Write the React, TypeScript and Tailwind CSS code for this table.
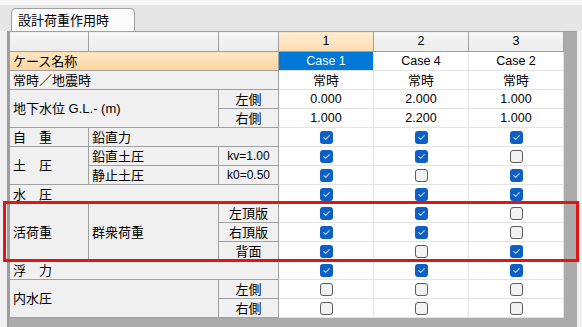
import React from "react";

type Cell = boolean;

const lbl = "border border-[#a0a0a0] bg-[#f0f0f0] px-[3px] text-left";
const lblC = "border border-[#a0a0a0] bg-[#f0f0f0] text-center";
const dat = "border border-[#e3e3e3] bg-white text-center";

const Check = ({ on }: { on: Cell }) =>
  on ? (
    <span className="inline-flex w-[13px] h-[13px] rounded-[3px] bg-[#0d5fc3] items-center justify-center align-middle">
      <svg width="9" height="9" viewBox="0 0 9 9" fill="none">
        <path d="M1.8 4.6 L3.7 6.4 L7.3 2.6" stroke="#a9cdf3" strokeWidth="1.3" strokeLinecap="round" strokeLinejoin="round" />
      </svg>
    </span>
  ) : (
    <span className="inline-block w-[13px] h-[13px] rounded-[3px] bg-[#f2f2f2] border-[1.5px] border-[#5c5c5c] align-middle" />
  );

const Checks = ({ v }: { v: Cell[] }) => (
  <>
    {v.map((on, i) => (
      <td key={i} className={dat}>
        <div className="flex items-center justify-center">
          <Check on={on} />
        </div>
      </td>
    ))}
  </>
);

const App = () => {
  return (
    <div className="relative w-[582px] h-[327px] bg-[#f0f0f0] overflow-hidden text-[12.5px] leading-none text-black font-['Liberation_Sans','Noto_Sans_CJK_JP',sans-serif]">
      {/* tab strip */}
      <div className="h-[31px] pt-[8px] pl-[11px] mt-0 bg-[linear-gradient(#f7f7f7_0px,#f7f7f7_5px,#e6e6e6_5px)]">
        <div className="w-[124px] h-[23px] bg-[#fbfbfb] border border-b-0 border-[#a0a0a0] rounded-t-[5px] pl-[6px] pt-[5px] text-[13px]">
          設計荷重作用時
        </div>
      </div>

      {/* grid area, gray behind = scroll track */}
      <div className="ml-[7px] w-[570px] h-[296px] bg-[#ababab] border-t border-l-2 border-[#9c9c9c]">
        <table className="table-fixed border-collapse w-[554px] -mt-px">
          <colgroup>
            <col className="w-[79px]" />
            <col className="w-[130px]" />
            <col className="w-[60px]" />
            <col className="w-[95px]" />
            <col className="w-[95px]" />
            <col className="w-[95px]" />
          </colgroup>
          <tbody>
            <tr className="h-[20px]">
              <td className={`${lbl} bg-[linear-gradient(#f6f6f6,#ececec)]`} />
              <td className={`${lbl} bg-[linear-gradient(#f6f6f6,#ececec)]`} />
              <td className={`${lbl} bg-[linear-gradient(#f6f6f6,#ececec)]`} />
              <td className="border border-[#a0a0a0] text-center bg-[linear-gradient(#fdecd3,#fcdcb0)]">1</td>
              <td className="border border-[#a0a0a0] text-center bg-[linear-gradient(#f6f6f6,#ececec)]">2</td>
              <td className="border border-[#a0a0a0] text-center bg-[linear-gradient(#f6f6f6,#ececec)]">3</td>
            </tr>
            <tr className="h-[19px]">
              <td colSpan={3} className="border border-[#a0a0a0] px-[3px] text-left text-[13px] bg-[linear-gradient(#fde7c7,#fbd49b)]">
                ケース名称
              </td>
              <td className="border border-[#e3e3e3] bg-[#0078d7] text-white text-center">Case 1</td>
              <td className={dat}>Case 4</td>
              <td className={dat}>Case 2</td>
            </tr>
            <tr className="h-[19px] text-[13px]">
              <td colSpan={3} className={lbl}>常時／地震時</td>
              <td className={dat}>常時</td>
              <td className={dat}>常時</td>
              <td className={dat}>常時</td>
            </tr>
            <tr className="h-[19px]">
              <td colSpan={2} rowSpan={2} className={`${lbl} text-[13px]`}>地下水位 G.L.- (m)</td>
              <td className={`${lblC} text-[13px]`}>左側</td>
              <td className={dat}>0.000</td>
              <td className={dat}>2.000</td>
              <td className={dat}>1.000</td>
            </tr>
            <tr className="h-[19px]">
              <td className={`${lblC} text-[13px]`}>右側</td>
              <td className={dat}>1.000</td>
              <td className={dat}>2.200</td>
              <td className={dat}>1.000</td>
            </tr>
            <tr className="h-[19px] text-[13px]">
              <td className={lbl}>自　重</td>
              <td colSpan={2} className={lbl}>鉛直力</td>
              <Checks v={[true, true, true]} />
            </tr>
            <tr className="h-[19px] text-[13px]">
              <td rowSpan={2} className={lbl}>土　圧</td>
              <td className={lbl}>鉛直土圧</td>
              <td className={`${lblC} text-[12px]`}>kv=1.00</td>
              <Checks v={[true, true, false]} />
            </tr>
            <tr className="h-[19px] text-[13px]">
              <td className={lbl}>静止土圧</td>
              <td className={`${lblC} text-[12px]`}>k0=0.50</td>
              <Checks v={[true, false, true]} />
            </tr>
            <tr className="h-[19px] text-[13px]">
              <td colSpan={3} className={lbl}>水　圧</td>
              <Checks v={[true, true, true]} />
            </tr>
            <tr className="h-[19px] text-[13px]">
              <td rowSpan={3} className={lbl}>活荷重</td>
              <td rowSpan={3} className={lbl}>群衆荷重</td>
              <td className={lblC}>左頂版</td>
              <Checks v={[true, true, false]} />
            </tr>
            <tr className="h-[19px] text-[13px]">
              <td className={lblC}>右頂版</td>
              <Checks v={[true, true, false]} />
            </tr>
            <tr className="h-[19px] text-[13px]">
              <td className={lblC}>背面</td>
              <Checks v={[true, false, true]} />
            </tr>
            <tr className="h-[19px] text-[13px]">
              <td colSpan={3} className={lbl}>浮　力</td>
              <Checks v={[true, true, true]} />
            </tr>
            <tr className="h-[19px] text-[13px]">
              <td colSpan={2} rowSpan={2} className={lbl}>内水圧</td>
              <td className={lblC}>左側</td>
              <Checks v={[false, false, false]} />
            </tr>
            <tr className="h-[19px] text-[13px]">
              <td className={lblC}>右側</td>
              <Checks v={[false, false, false]} />
            </tr>
          </tbody>
        </table>
      </div>

      {/* highlight frame around the live-load rows */}
      <div className="absolute left-[3px] top-[201px] w-[576px] h-[61px] border-[3px] border-[#e21414] pointer-events-none" />
    </div>
  );
};

export default App;
